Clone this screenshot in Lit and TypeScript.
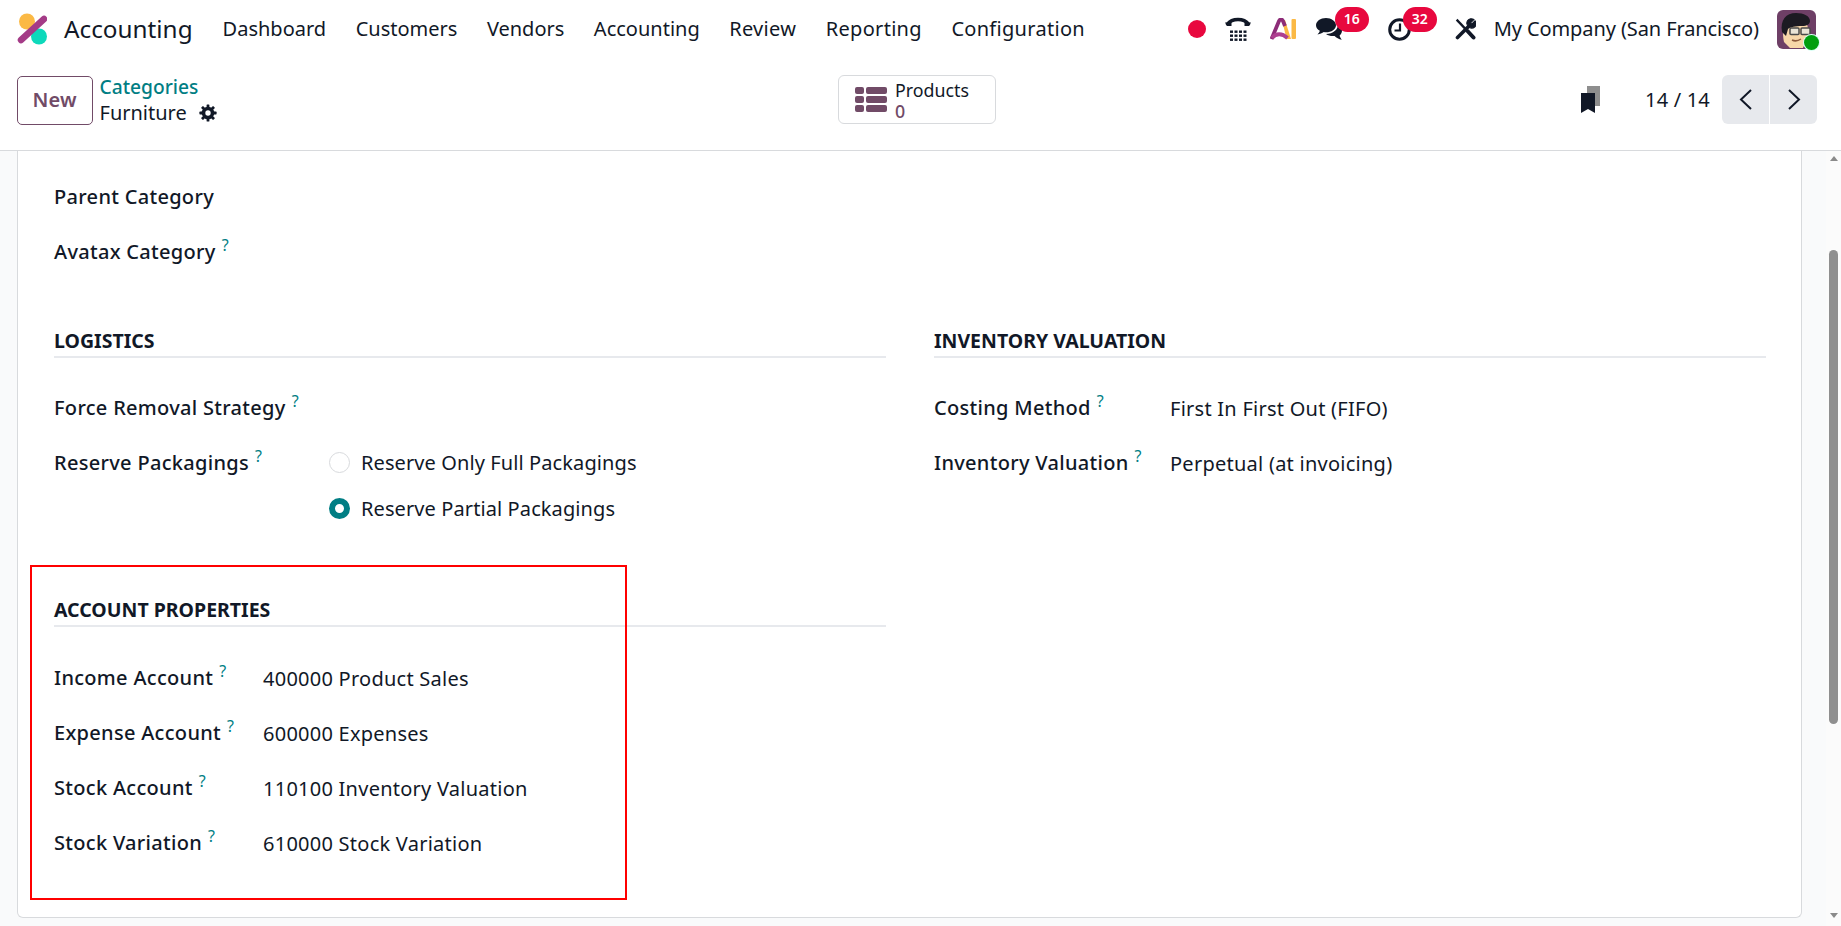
import { LitElement, html, css, svg } from 'lit'
import { customElement } from 'lit/decorators.js'

const navItems = ['Dashboard', 'Customers', 'Vendors', 'Accounting', 'Review', 'Reporting', 'Configuration']

const gearTeeth = [0, 45, 90, 135].map(
  (a) => svg`<rect x="7.6" y="0.4" width="2.8" height="17.2" rx="0.6" fill="#111827" transform="rotate(${a} 9 9)" />`,
)

@customElement('app-root')
export class AppRoot extends LitElement {
  static styles = css`
    :host {
      display: flex;
      flex-direction: column;
      height: 926px;
      overflow: hidden;
      background: #f9fafb;
      color: #111827;
      font-family: 'Noto Sans', sans-serif;
      font-size: 20px;
    }

    svg {
      display: block;
    }

    .topbar {
      flex: 0 0 60px;
      display: flex;
      align-items: center;
      background: #fff;
      padding: 0 25px 2px 15px;
      box-sizing: border-box;
    }

    .logo {
      margin-right: 17px;
    }

    .brand {
      font-size: 24.3px;
      margin: 0 30px 2px 0;
    }

    .nav {
      display: flex;
      gap: 29.5px;
      margin-bottom: 2px;
    }

    .nav span:nth-child(n + 5) {
      letter-spacing: 0.3px;
    }

    .systray {
      margin-left: auto;
      display: flex;
      align-items: center;
      gap: 18px;
    }

    .ai-mark {
      margin-right: 2px;
    }

    .company {
      margin-bottom: 2px;
      letter-spacing: -0.1px;
    }

    .counter {
      position: relative;
      margin-right: 27px;
    }

    .counter.activity {
      margin-right: 26px;
    }

    .badge {
      position: absolute;
      top: -11px;
      width: 34px;
      height: 25px;
      border-radius: 12.5px;
      background: #e8083e;
      color: #fff;
      font-size: 14px;
      font-weight: 600;
      line-height: 24px;
      text-align: center;
    }

    .badge.chat {
      left: 19px;
    }

    .badge.activity {
      left: 15px;
    }

    .avatar {
      position: relative;
    }

    .status {
      position: absolute;
      right: -3px;
      bottom: -1px;
      width: 15px;
      height: 15px;
      border-radius: 50%;
      background: #009e0f;
      box-shadow: 0 0 0 1px #d6fff4;
    }

    .panel {
      flex: 0 0 91px;
      box-sizing: border-box;
      display: flex;
      align-items: flex-start;
      background: #fff;
      border-bottom: 1px solid #d8dadd;
      padding: 15px 24px 0 17px;
    }

    .panel-left {
      flex: 0 0 821px;
      display: flex;
      align-items: flex-start;
      gap: 7px;
    }

    .new-btn {
      width: 75.5px;
      height: 49px;
      margin-top: 1px;
      box-sizing: border-box;
      border: 1px solid #714b67;
      border-radius: 5px;
      color: #714b67;
      font-weight: 600;
      letter-spacing: 0.2px;
      padding-bottom: 2px;
      display: flex;
      align-items: center;
      justify-content: center;
    }

    .crumbs {
      line-height: 26px;
      margin-top: -1px;
    }

    .crumb-link {
      color: #017e84;
      font-size: 19.2px;
      font-weight: 500;
    }

    .crumb-current {
      display: flex;
      align-items: center;
      gap: 12px;
    }

    .stat {
      flex: 0 0 158px;
      height: 49px;
      box-sizing: border-box;
      border: 1px solid #d8dadd;
      border-radius: 6px;
      display: flex;
      align-items: center;
      gap: 8px;
      padding-left: 16px;
      line-height: 21px;
      font-size: 17.8px;
    }

    .stat-text {
      margin-top: 3px;
    }

    .stat-count {
      color: #714b67;
      font-weight: 500;
    }

    .panel-right {
      margin-left: auto;
      display: flex;
      align-items: center;
      height: 49px;
    }

    .pager-text {
      margin: 0 12px 0 45px;
      letter-spacing: 0.2px;
    }

    .pager {
      display: flex;
      gap: 1px;
      border-radius: 6px;
      overflow: hidden;
    }

    .pager-btn {
      width: 47px;
      height: 49px;
      background: #e7e9ed;
      display: flex;
      align-items: center;
      justify-content: center;
    }

    .main {
      flex: 1;
      min-height: 0;
      display: flex;
    }

    .content {
      flex: 1;
      min-width: 0;
      padding: 0 24px 8px 17px;
    }

    .sheet {
      position: relative;
      height: 100%;
      box-sizing: border-box;
      background: #fff;
      border: 1px solid #d8dadd;
      border-top: 0;
      border-radius: 0 0 6px 6px;
      padding: 18px 35px 0 36px;
    }

    .scrollbar {
      flex: 0 0 15px;
      background: #fbfbfb;
      display: flex;
      flex-direction: column;
      align-items: center;
      padding-top: 5px;
    }

    .arrow-up,
    .arrow-down {
      width: 0;
      height: 0;
      border-left: 4.5px solid transparent;
      border-right: 4.5px solid transparent;
    }

    .arrow-up {
      border-bottom: 5px solid #8a8a8a;
    }

    .arrow-down {
      border-top: 5px solid #8a8a8a;
      margin-top: 189px;
    }

    .thumb {
      width: 9px;
      height: 474px;
      margin-top: 89px;
      border-radius: 4.5px;
      background: #8f8f8f;
    }

    .row {
      height: 55px;
      display: flex;
      align-items: center;
    }

    .row.top {
      height: auto;
      align-items: flex-start;
    }

    .row.top .label-col {
      line-height: 55px;
    }

    .label {
      font-weight: 500;
      letter-spacing: 0.3px;
      white-space: nowrap;
    }

    .value {
      letter-spacing: 0.25px;
      padding-top: 2px;
    }

    .help {
      color: #017e84;
      font-size: 16px;
      font-weight: 400;
      margin-left: 6px;
      position: relative;
      top: -8px;
    }

    .columns {
      display: grid;
      grid-template-columns: 832px 832px;
      gap: 48px;
      margin-top: 47px;
    }

    .title {
      height: 30px;
      line-height: 29px;
      font-size: 19.5px;
      font-weight: 700;
      border-bottom: 2px solid #e7e9ed;
      margin-bottom: 22px;
      white-space: nowrap;
    }

    .account {
      width: 832px;
      margin-top: 63.5px;
    }

    .account .title {
      margin-bottom: 23px;
    }

    .logistics .label-col {
      flex: 0 0 275px;
    }

    .inventory .label-col {
      flex: 0 0 236px;
    }

    .account .label-col {
      flex: 0 0 209px;
    }

    .options {
      padding-top: 4px;
    }

    .option {
      height: 46px;
      display: flex;
      align-items: center;
      gap: 11px;
      letter-spacing: 0.1px;
    }

    .radio {
      width: 21px;
      height: 21px;
      box-sizing: border-box;
      border-radius: 50%;
      border: 1px solid #d8dadd;
    }

    .radio.on {
      border: 6.5px solid #017e84;
    }

    .marker {
      position: absolute;
      left: 11.5px;
      top: 414px;
      width: 597px;
      height: 335px;
      border: 2px solid #f00;
      box-sizing: border-box;
    }
  `

  private renderLogo() {
    return html`<svg class="logo" width="32" height="32" viewBox="0 0 32 32">
      <circle cx="12" cy="8.500" r="8" fill="#fbb945" />
      <circle cx="24" cy="23.500" r="8" fill="#0dd9bb" />
      <line x1="6" y1="27" x2="29" y2="6" stroke="#a43b87" stroke-width="6.500" stroke-linecap="round" />
    </svg>`
  }

  private renderSystray() {
    return html`<div class="systray">
      <svg width="18" height="18" viewBox="0 0 18 18"><circle cx="9" cy="9" r="9" fill="#e8083e" /></svg>
      <svg width="28" height="26" viewBox="0 0 28 26">
        <path d="M3.500 8C8 2 20 2 24.500 8" fill="none" stroke="#111827" stroke-width="3.400" stroke-linecap="round" />
        <path d="M1 6.500h6.500v3.600H3zM20.500 6.500H27l-2 3.600h-4.500z" fill="#111827" />
        <g fill="#111827">
          ${[14.5, 18.5, 22.5].map((y) =>
            [6, 10.5, 15, 19.5].map((x) => svg`<rect x=${x} y=${y} width="3" height="2.400" />`),
          )}
        </g>
      </svg>
      <svg class="ai-mark" width="26" height="22" viewBox="0 0 26 22">
        <path d="M12 2 15 2 21 21H16.500z" fill="#fbb945" />
        <path d="M1.500 21 9 3C10 1 12 1 13 3L15 8" fill="none" stroke="#8d2c78" stroke-width="3.800" />
        <path d="M2 20C6 15 12 15 17.500 20" fill="none" stroke="#ad3f8f" stroke-width="3.800" />
        <rect x="21.500" y="1" width="4.500" height="20" rx="1" fill="#fbb945" />
      </svg>
      <div class="counter">
        <svg width="27" height="22" viewBox="0 0 27 22" fill="#111827">
          <path d="M10 0C4.500 0 0 3.200 0 7.200c0 2.300 1.500 4.300 3.800 5.600C3.500 14.200 2.600 15.400 1.500 16.400c2.500-.2 4.700-1.100 6.300-2.300 .7.100 1.400.2 2.200.2 5.500 0 10-3.200 10-7.100S15.500 0 10 0z" />
          <path d="M22 6.500c.2 5-5 9.300-12 9.600 2 1.400 4.200 2 6.800 2 .6 0 1.200 0 1.800-.1 1.600 1.800 4.200 3.200 7.200 3.800-1-1.200-1.800-2.500-2.200-4.300 1.500-1.200 2.400-3 2.400-4.800 0-2.800-1.500-5-4-6.200z" />
        </svg>
        <span class="badge chat">16</span>
      </div>
      <div class="counter activity">
        <svg width="23" height="23" viewBox="0 0 23 23" fill="none" stroke="#111827">
          <circle cx="11.500" cy="11.500" r="9.800" stroke-width="3" />
          <path d="M12 5.500V12.500H6.500" stroke-width="2.200" />
        </svg>
        <span class="badge activity">32</span>
      </div>
      <svg width="21" height="22" viewBox="0 0 21 22" fill="none" stroke="#111827">
        <path d="M2.500 2.500 11 11.500" stroke-width="2.400" stroke-linecap="square" />
        <path d="M12.500 13 18.500 19.500" stroke-width="4" stroke-linecap="round" />
        <path d="M2.500 19.500 13 9" stroke-width="3.600" stroke-linecap="round" />
        <path d="M18.800 1.600 15.500 4.800 16.800 6.200 20 3A4.200 4.200 0 0 1 13.600 8.600 4.200 4.200 0 0 1 18.800 1.600Z" fill="#111827" stroke-width="1.200" />
      </svg>
      <span class="company">My Company (San Francisco)</span>
      <div class="avatar">
        <svg width="39" height="39" viewBox="0 0 39 39">
          <rect width="39" height="39" rx="6" fill="#6e3f66" />
          <path d="M7 32C6 28 6 24 6 20c0-8 6-12 13-12s13 5 12 14c-1 7-3 11-5 16H13z" fill="#f7d7a9" />
          <path d="M5 22C3 10 9 3 19 3c8 0 14 3 14 8 0 3-3 5-8 5-6 0-12 1-14 3l-2 7z" fill="#1c1a22" />
          <rect x="13" y="18" width="9" height="6.500" rx="1" fill="#e9e4d6" stroke="#4a4a4a" stroke-width="1.500" />
          <rect x="24" y="18" width="9" height="6.500" rx="1" fill="#e9e4d6" stroke="#4a4a4a" stroke-width="1.500" />
          <path d="M15 30c3 1.500 6 1 9-1" fill="none" stroke="#8c5a3c" stroke-width="1.500" />
        </svg>
        <span class="status"></span>
      </div>
    </div>`
  }

  private renderPanel() {
    return html`<div class="panel">
      <div class="panel-left">
        <div class="new-btn">New</div>
        <div class="crumbs">
          <div class="crumb-link">Categories</div>
          <div class="crumb-current">
            Furniture
            <svg width="18" height="18" viewBox="0 0 18 18">
              ${gearTeeth}
              <circle cx="9" cy="9" r="6.300" fill="#111827" />
              <circle cx="9" cy="9" r="2.700" fill="#fff" />
            </svg>
          </div>
        </div>
      </div>
      <div class="stat">
        <svg width="32" height="25" viewBox="0 0 32 25" fill="#714b67">
          ${[0, 9, 18].map(
            (y) => svg`<rect x="0" y=${y} width="9" height="7" rx="2" /><rect x="11" y=${y} width="21" height="7" rx="2" />`,
          )}
        </svg>
        <div class="stat-text">
          <div>Products</div>
          <div class="stat-count">0</div>
        </div>
      </div>
      <div class="panel-right">
        <svg width="19" height="27" viewBox="0 0 19 27">
          <path d="M6 0H19V20H6z" fill="#8e8e8e" />
          <path d="M0 7H14V27L7 23 0 27z" fill="#111827" />
        </svg>
        <span class="pager-text">14 / 14</span>
        <div class="pager">
          <div class="pager-btn">
            <svg width="14" height="21" viewBox="0 0 14 21" fill="none" stroke="#111827" stroke-width="2"><path d="M12 1 2 10.500 12 20" /></svg>
          </div>
          <div class="pager-btn">
            <svg width="14" height="21" viewBox="0 0 14 21" fill="none" stroke="#111827" stroke-width="2"><path d="M2 1 12 10.500 2 20" /></svg>
          </div>
        </div>
      </div>
    </div>`
  }

  private labelCol(label: string, help = true) {
    return html`<div class="label-col"><span class="label">${label}</span>${help ? html`<span class="help">?</span>` : ''}</div>`
  }

  private row(label: string, value = '', help = true) {
    return html`<div class="row">${this.labelCol(label, help)}<div class="value">${value}</div></div>`
  }

  render() {
    return html`
      <div class="topbar">
        ${this.renderLogo()}
        <span class="brand">Accounting</span>
        <div class="nav">${navItems.map((n) => html`<span>${n}</span>`)}</div>
        ${this.renderSystray()}
      </div>
      ${this.renderPanel()}
      <div class="main">
        <div class="content">
          <div class="sheet">
            ${this.row('Parent Category', '', false)} ${this.row('Avatax Category')}
            <div class="columns">
              <div class="logistics">
                <div class="title">LOGISTICS</div>
                ${this.row('Force Removal Strategy')}
                <div class="row top">
                  ${this.labelCol('Reserve Packagings')}
                  <div class="options">
                    <div class="option"><span class="radio"></span>Reserve Only Full Packagings</div>
                    <div class="option"><span class="radio on"></span>Reserve Partial Packagings</div>
                  </div>
                </div>
              </div>
              <div class="inventory">
                <div class="title">INVENTORY VALUATION</div>
                ${this.row('Costing Method', 'First In First Out (FIFO)')}
                ${this.row('Inventory Valuation', 'Perpetual (at invoicing)')}
              </div>
            </div>
            <div class="account">
              <div class="title">ACCOUNT PROPERTIES</div>
              ${this.row('Income Account', '400000 Product Sales')}
              ${this.row('Expense Account', '600000 Expenses')}
              ${this.row('Stock Account', '110100 Inventory Valuation')}
              ${this.row('Stock Variation', '610000 Stock Variation')}
            </div>
            <div class="marker"></div>
          </div>
        </div>
        <div class="scrollbar">
          <div class="arrow-up"></div>
          <div class="thumb"></div>
          <div class="arrow-down"></div>
        </div>
      </div>
    `
  }
}
